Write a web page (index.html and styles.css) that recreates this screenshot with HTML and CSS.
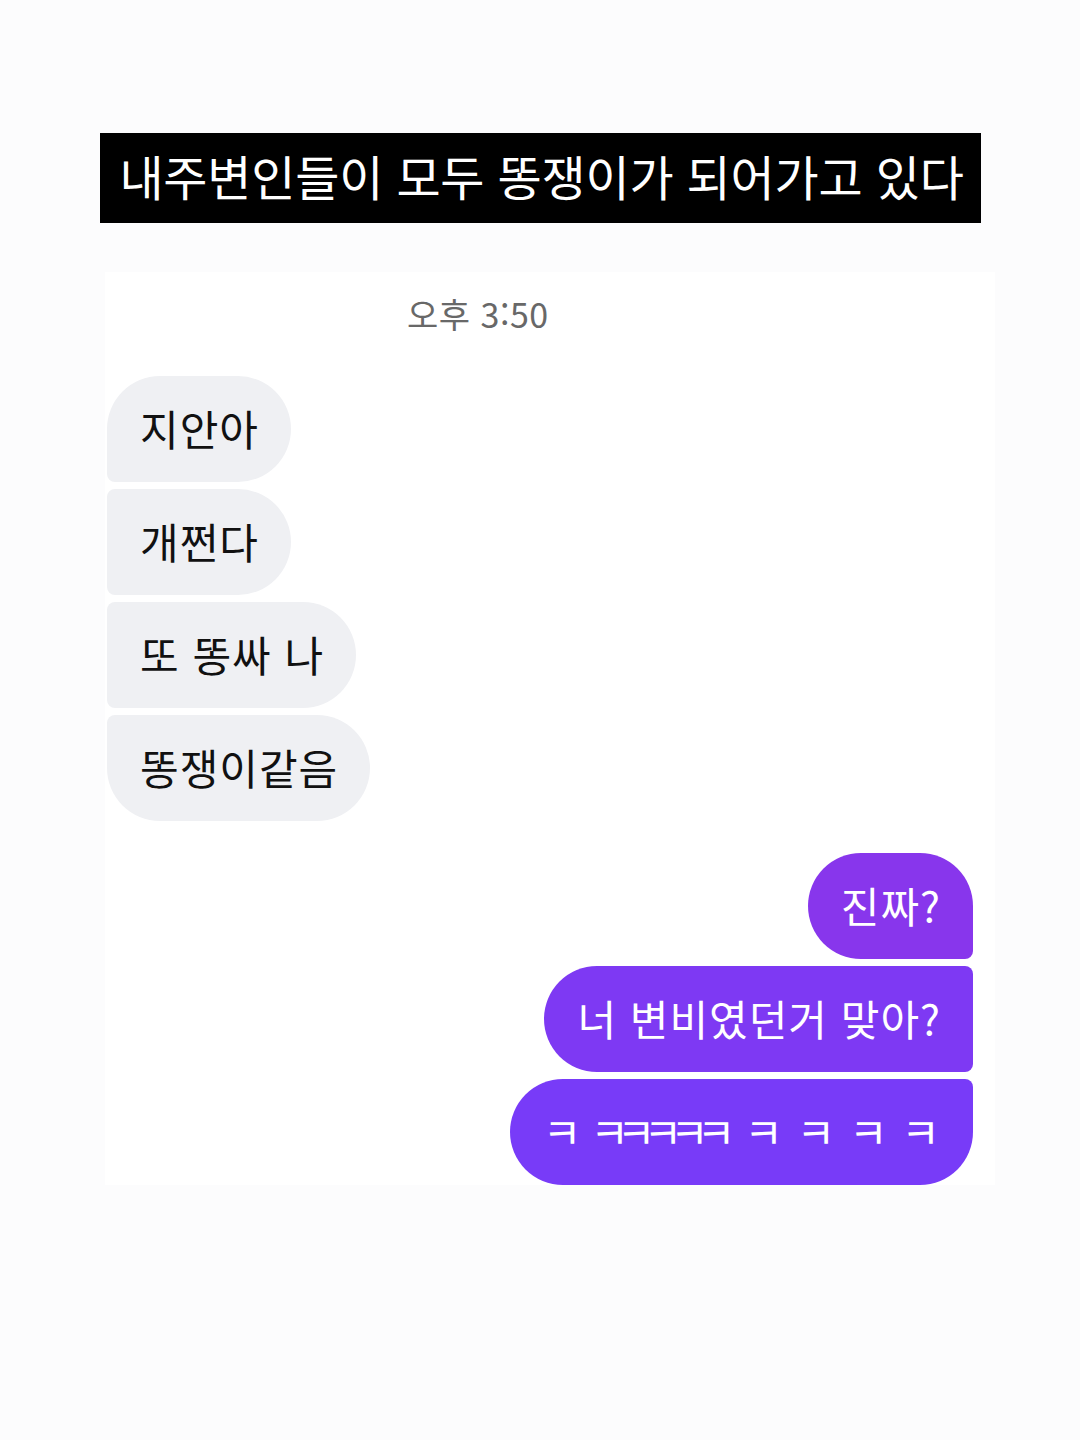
FILE: index.html
```html
<!DOCTYPE html>
<html lang="ko">
<head>
    <meta charset="UTF-8">
    <meta name="viewport" content="width=device-width, initial-scale=1.0">
    <title>똥쟁이</title>
    <link rel="stylesheet" href="styles.css">
</head>
<body>
    <div class="page">
        <h1 class="title">내주변인들이 모두 똥쟁이가 되어가고 있다</h1>

        <div class="chat">
            <div class="time">오후 3:50</div>

            <div class="group group-left">
                <div class="bubble in first">지안아</div>
                <div class="bubble in">개쩐다</div>
                <div class="bubble in">또 똥싸 나</div>
                <div class="bubble in last">똥쟁이같음</div>
            </div>

            <div class="group group-right">
                <div class="bubble out first out-1">진짜?</div>
                <div class="bubble out out-2">너 변비였던거 맞아?</div>
                <div class="bubble out last out-3">ㅋ&nbsp;<span class="tight">ㅋㅋㅋㅋㅋ</span>&nbsp;ㅋ ㅋ ㅋ ㅋ</div>
            </div>
        </div>
    </div>
</body>
</html>
```

FILE: styles.css
```css
body {
    margin: 0;
    background-color: #fcfcfd;
    font-family: "Noto Sans CJK KR", "Noto Sans", sans-serif;
}
.page {
    padding-top: 133px;
    height: 1307px;
}
.title {
    margin: 0 0 0 100px;
    width: 881px;
    height: 90px;
    background-color: #000;
    color: #fff;
    font-size: 48px;
    font-weight: 400;
    line-height: 84px;
    text-align: center;
    box-sizing: border-box;
    padding-left: 2px;
    letter-spacing: -0.2px;
}
.chat {
    margin: 49px 0 0 105px;
    width: 890px;
    background-color: #fff;
    padding: 0 22px 0 2px;
    box-sizing: border-box;
    overflow: hidden;
}
.time {
    padding: 20px 0 0 300px;
    height: 104px;
    box-sizing: border-box;
    font-size: 34px;
    line-height: 44px;
    color: #686868;
    letter-spacing: 0.5px;
}
.group {
    display: flex;
    flex-direction: column;
    gap: 7px;
}
.group-left {
    align-items: flex-start;
}
.group-right {
    align-items: flex-end;
    margin-top: 32px;
}
.bubble {
    height: 106px;
    padding: 0 32px 4px 33px;
    box-sizing: border-box;
    display: flex;
    align-items: center;
    font-size: 42px;
    letter-spacing: 1px;
    white-space: pre;
}
.tight {
    letter-spacing: -12px;
    margin-left: -5px;
    margin-right: 8px;
}
.in {
    background-color: #eff0f3;
    color: #111;
    border-radius: 8px 53px 53px 8px;
}
.in.first {
    border-top-left-radius: 53px;
}
.in.last {
    border-bottom-left-radius: 53px;
}
.out {
    color: #fff;
    border-radius: 53px 8px 8px 53px;
}
.out.first {
    border-top-right-radius: 53px;
}
.out.last {
    border-bottom-right-radius: 53px;
}
.out-1 {
    background-color: #8836ec;
}
.out-2 {
    background-color: #7e39f3;
}
.out-3 {
    background-color: #783bf8;
}
```
